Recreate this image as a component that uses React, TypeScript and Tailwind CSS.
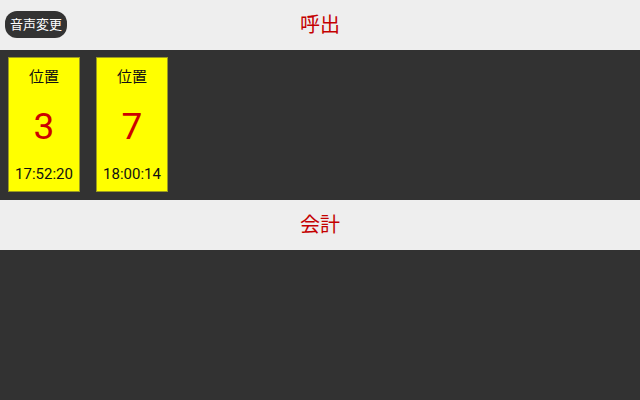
import React from "react";

const cards = [
  { num: "3", time: "17:52:20" },
  { num: "7", time: "18:00:14" },
];

export default function App() {
  return (
    <div
      className="w-[640px] h-[400px] flex flex-col bg-[#323232] overflow-hidden"
      style={{ fontFamily: 'Roboto, "Noto Sans CJK JP", sans-serif' }}
    >
      <div className="relative h-[50px] bg-[#eeeeee] flex items-center justify-center">
        <button className="absolute left-[5px] top-[11px] h-[27px] px-[5px] rounded-[12px] bg-[#333333] text-white text-[13px] leading-none">
          音声変更
        </button>
        <span className="text-[#c40000] text-[20px]">呼出</span>
      </div>
      <div className="h-[150px] flex gap-[16px] pl-[8px] pt-[7px]">
        {cards.map((c) => (
          <div
            key={c.num}
            className="w-[72px] h-[135px] bg-[#ffff00] border border-[#9a9a20] flex flex-col items-center"
          >
            <div className="mt-[9px] text-[15px] leading-[20px] text-[#111]">位置</div>
            <div className="mt-[20px] text-[37px] leading-[40px] text-[#cc0000]">{c.num}</div>
            <div className="mt-[17px] text-[15px] leading-[20px] text-[#111]">{c.time}</div>
          </div>
        ))}
      </div>
      <div className="h-[50px] bg-[#eeeeee] flex items-center justify-center">
        <span className="text-[#c40000] text-[20px]">会計</span>
      </div>
      <div className="flex-1 bg-[#323232]" />
    </div>
  );
}
